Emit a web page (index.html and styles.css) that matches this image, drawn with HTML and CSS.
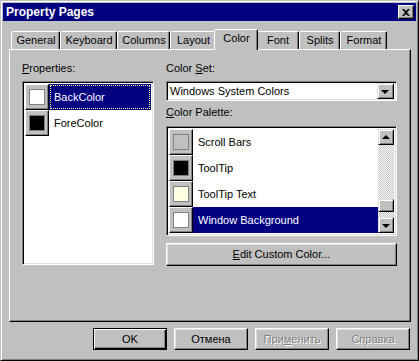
FILE: index.html
```html
<!DOCTYPE html>
<html lang="en">

<head>
    <meta name="viewport" content="width=device-width, initial-scale=1.0">
    <title>Property Pages</title>
    <link rel="stylesheet" href="styles.css">
</head>

<body>
    <div class="janela">
        <!-- barra de titulo -->
        <div class="titulo">
            <span>Property Pages</span>
            <button class="fechar">
                <svg width="8" height="7" viewBox="0 0 8 7"><path d="M0 0h2l2 2 2-2h2L5 3.5 8 7H6L4 5 2 7H0l3-3.5z" fill="#000"/></svg>
            </button>
        </div>

        <!-- abas -->
        <div class="abas">
            <div class="aba" style="width:49px">General</div>
            <div class="aba" style="width:57px">Keyboard</div>
            <div class="aba" style="width:53px">Columns</div>
            <div class="aba" style="width:46px">Layout</div>
            <div class="aba ativa" style="width:40px">Color</div>
            <div class="aba" style="width:43px">Font</div>
            <div class="aba" style="width:41px">Splits</div>
            <div class="aba" style="width:47px">Format</div>
        </div>

        <div class="painel">
            <div class="coluna-esq">
                <div class="rotulo"><span class="atalho">P</span>roperties:</div>
                <div class="lista lista-props">
                    <div class="item selecionado">
                        <div class="amostra"><i style="background:#fff"></i></div>
                        <div class="texto"><span class="foco">BackColor</span></div>
                    </div>
                    <div class="item">
                        <div class="amostra"><i style="background:#000"></i></div>
                        <div class="texto">ForeColor</div>
                    </div>
                </div>
            </div>

            <div class="coluna-dir">
                <div class="rotulo">Color <span class="atalho">S</span>et:</div>
                <div class="combo">
                    <span>Windows System Colors</span>
                    <div class="seta-botao"><b class="seta-baixo"></b></div>
                </div>
                <div class="rotulo rotulo-paleta"><span class="atalho">C</span>olor Palette:</div>
                <div class="lista lista-paleta">
                    <div class="itens">
                        <div class="item">
                            <div class="amostra"><i style="background:#c0c0c0"></i></div>
                            <div class="texto">Scroll Bars</div>
                        </div>
                        <div class="item">
                            <div class="amostra"><i style="background:#000"></i></div>
                            <div class="texto">ToolTip</div>
                        </div>
                        <div class="item">
                            <div class="amostra"><i style="background:#ffffe1"></i></div>
                            <div class="texto">ToolTip Text</div>
                        </div>
                        <div class="item selecionado">
                            <div class="amostra"><i style="background:#fff"></i></div>
                            <div class="texto">Window Background</div>
                        </div>
                        <!-- proxima linha, so aparece a pontinha da amostra -->
                        <div class="item">
                            <div class="amostra"><i style="background:#000"></i></div>
                        </div>
                    </div>
                    <div class="rolagem">
                        <div class="seta-botao"><b class="seta-cima"></b></div>
                        <div class="trilho">
                            <div class="polegar"></div>
                        </div>
                        <div class="seta-botao"><b class="seta-baixo"></b></div>
                    </div>
                </div>
                <div class="botao botao-largo"><span class="rotulo-botao">Edit Custom Color...</span></div>
            </div>
        </div>

        <!-- botoes de baixo -->
        <div class="rodape">
            <button class="botao padrao">OK</button>
            <button class="botao">Отмена</button>
            <button class="botao desativado">При<span class="atalho">м</span>енить</button>
            <button class="botao desativado">Справка</button>
        </div>
    </div>
</body>

</html>
```

FILE: styles.css
```css
* {
    padding: 0;
    margin: 0;
    box-sizing: border-box;
}

body {
    font-family: 'Liberation Sans', Arial, sans-serif;
    font-size: 11px;
    color: #000;
    background-color: #c0c0c0;
}

.atalho {
    text-decoration: underline;
}

.janela {
    width: 419px;
    height: 361px;
    background-color: #c0c0c0;
    border: 1px solid;
    border-color: #c0c0c0 #000 #000 #c0c0c0;
    box-shadow: inset 1px 1px #fff, inset -1px -1px #808080;
    padding: 2px;
}

.titulo {
    height: 18px;
    background-color: #000080;
    color: #fff;
    font-weight: bold;
    font-size: 12px;
    display: flex;
    align-items: center;
    justify-content: space-between;
    padding: 0 2px 0 3px;
}

.fechar {
    width: 16px;
    height: 14px;
    background-color: #c0c0c0;
    border: 1px solid;
    border-color: #fff #000 #000 #fff;
    box-shadow: inset -1px -1px #808080;
    display: flex;
    align-items: center;
    justify-content: center;
}

/* abas */
.abas {
    display: flex;
    align-items: flex-end;
    margin: 8px 0 0 8px;
    height: 20px;
}

.aba {
    height: 18px;
    background-color: #c0c0c0;
    border-top: 1px solid #fff;
    border-left: 1px solid #fff;
    border-right: 1px solid #000;
    border-radius: 2px 2px 0 0;
    box-shadow: inset -1px 0 #808080;
    text-align: center;
    line-height: 17px;
    padding-left: 1px;
    white-space: nowrap;
}

.aba.ativa {
    height: 21px;
    margin: 0 -2px -1px -2px;
    width: 44px !important;
    position: relative;
    z-index: 1;
    line-height: 16px;
}

.painel {
    height: 273px;
    margin-left: 6px;
    width: 402px;
    border: 1px solid;
    border-color: #fff #000 #000 #fff;
    box-shadow: inset -1px -1px #808080;
    display: flex;
    gap: 12px;
    padding: 12px 0 0 12px;
}

.rotulo {
    height: 13px;
    line-height: 13px;
    margin-bottom: 6px;
    white-space: nowrap;
}

.coluna-esq {
    width: 132px;
}

.coluna-dir {
    width: 231px;
}

.lista {
    background-color: #fff;
    border: 1px solid;
    border-color: #808080 #fff #fff #808080;
    box-shadow: inset 1px 1px #000, inset -1px -1px #dfdfdf;
    padding: 2px;
}

.lista-props {
    height: 184px;
}

.lista-paleta {
    height: 110px;
    display: flex;
    overflow: hidden;
}

.itens {
    flex: 1;
    overflow: hidden;
}

.item {
    display: flex;
    height: 26px;
}

.amostra {
    width: 24px;
    height: 26px;
    flex-shrink: 0;
    background-color: #c0c0c0;
    border: 1px solid;
    border-color: #fff #000 #000 #fff;
    box-shadow: inset -1px -1px #808080;
    display: flex;
    align-items: center;
    justify-content: center;
}

.amostra i {
    display: block;
    width: 16px;
    height: 16px;
    border: 1px solid #808080;
    margin: 0 1px 1px 0;
}

.texto {
    flex: 1;
    display: flex;
    align-items: center;
    padding-left: 5px;
    white-space: nowrap;
}

.item.selecionado .texto {
    background-color: #000080;
    color: #fff;
}

.lista-props .item.selecionado .texto {
    padding: 1px;
}

.foco {
    flex: 1;
    height: 100%;
    display: flex;
    align-items: center;
    padding-left: 3px;
    border: 1px dotted #ffff80;
}

.combo {
    height: 20px;
    background-color: #fff;
    border: 1px solid;
    border-color: #808080 #fff #fff #808080;
    box-shadow: inset 1px 1px #000, inset -1px -1px #dfdfdf;
    display: flex;
    align-items: center;
    justify-content: space-between;
    padding: 2px 2px 2px 3px;
}

.combo .seta-botao {
    width: 17px;
    height: 16px;
}

.rotulo-paleta {
    margin-top: 5px;
    margin-bottom: 7px;
}

.seta-botao {
    width: 16px;
    height: 16px;
    flex-shrink: 0;
    background-color: #c0c0c0;
    border: 1px solid;
    border-color: #dfdfdf #000 #000 #dfdfdf;
    box-shadow: inset 1px 1px #fff, inset -1px -1px #808080;
    display: flex;
    align-items: center;
    justify-content: center;
}

.seta-baixo {
    width: 0;
    height: 0;
    border-left: 4px solid transparent;
    border-right: 4px solid transparent;
    border-top: 4px solid #000;
    margin: 1px 1px 0 0;
}

.seta-cima {
    width: 0;
    height: 0;
    border-left: 4px solid transparent;
    border-right: 4px solid transparent;
    border-bottom: 4px solid #000;
    margin: 0 1px 1px 0;
}

.rolagem {
    width: 16px;
    display: flex;
    flex-direction: column;
}

.trilho {
    flex: 1;
    background-image: repeating-conic-gradient(#c0c0c0 0 25%, #fff 0 50%);
    background-size: 2px 2px;
    display: flex;
    flex-direction: column;
    justify-content: flex-end;
    padding-bottom: 5px;
}

.polegar {
    height: 13px;
    background-color: #c0c0c0;
    border: 1px solid;
    border-color: #dfdfdf #000 #000 #dfdfdf;
    box-shadow: inset 1px 1px #fff, inset -1px -1px #808080;
}

.botao {
    font-family: 'Liberation Sans', Arial, sans-serif;
    font-size: 11px;
    line-height: 13px;
    color: #000;
    width: 74px;
    height: 22px;
    background-color: #c0c0c0;
    border: 1px solid;
    border-color: #fff #000 #000 #fff;
    box-shadow: inset -1px -1px #808080, inset 1px 1px #dfdfdf;
}

.botao-largo {
    width: 231px;
    height: 23px;
    margin-top: 7px;
    display: flex;
    align-items: center;
    justify-content: center;
}

.rotulo-botao {
    display: block;
}

.rotulo-botao::first-letter {
    text-decoration: underline;
}

.botao.padrao {
    border: 1px solid #000;
    box-shadow: inset 1px 1px #fff, inset -1px -1px #000, inset -2px -2px #808080;
}

.botao.desativado {
    color: #808080;
    text-shadow: 1px 1px #fff;
}

.rodape {
    display: flex;
    justify-content: flex-end;
    gap: 7px;
    margin-top: 6px;
    padding-right: 6px;
}
```
